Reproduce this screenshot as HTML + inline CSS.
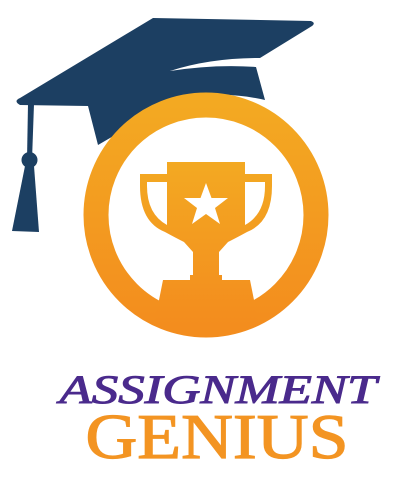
<!DOCTYPE html>
<html><head><style>
html,body{margin:0;padding:0;background:#fff;width:410px;height:477px;overflow:hidden}
svg{position:absolute;left:0;top:0}
.t{font-family:"Liberation Serif",serif}
</style></head><body>
<svg width="410" height="477" viewBox="0 0 410 477">
<defs>
<linearGradient id="g" x1="0" y1="0" x2="0" y2="1">
<stop offset="0" stop-color="#f3a922"/><stop offset="1" stop-color="#f38d1e"/>
</linearGradient>
</defs>
<path d="M153 18 L311 21 Q316 23 312 26 L260 58 Q210 58 170 71 Q215 64 256 67 L265 100 Q200 85 150 115 Q115 135 98 145 L88 106 L20 105 Q13 101 20 98 Z" fill="#1c3f62"/>
<path d="M28 104 L34 104 L32 160 L27 160 Z" fill="#1c3f62"/>
<circle cx="29.5" cy="160" r="8" fill="#1c3f62"/>
<path d="M25 166 L34 166 L39 232 L12 231 Z" fill="#1c3f62"/>
<circle cx="206" cy="215" r="110" fill="none" stroke="url(#g)" stroke-width="25"/>
<path d="M167 162 H245 V174 H272 V186 Q272 222 247 232 Q236 238 228 242 L219 252 V275 H222 V280 H250 L258 320 H155 L163 280 H190 V275 H193 V252 L184 242 Q176 238 165 232 Q140 222 140 186 V174 H167 Z" fill="url(#g)"/>
<path d="M147 182 H167 V225 Q147 214 147 186 Z" fill="#fff"/>
<path d="M265 182 H245 V225 Q265 214 265 186 Z" fill="#fff"/>
<path d="M206 183 L211.5 198 L228 198 L215 208 L220 224 L206 214 L192 224 L197 208 L184 198 L200.5 198 Z" fill="#fff"/>
<text x="218" y="403" text-anchor="middle" class="t" font-style="italic" font-size="40" fill="#4a2a8c" stroke="#4a2a8c" stroke-width="1" textLength="317" lengthAdjust="spacingAndGlyphs">ASSIGNMENT</text>
<text x="217" y="458" text-anchor="middle" class="t" font-size="64" fill="#f39422" stroke="#f39422" stroke-width="1.2" textLength="263" lengthAdjust="spacingAndGlyphs">GENIUS</text>
</svg>
</body></html>
